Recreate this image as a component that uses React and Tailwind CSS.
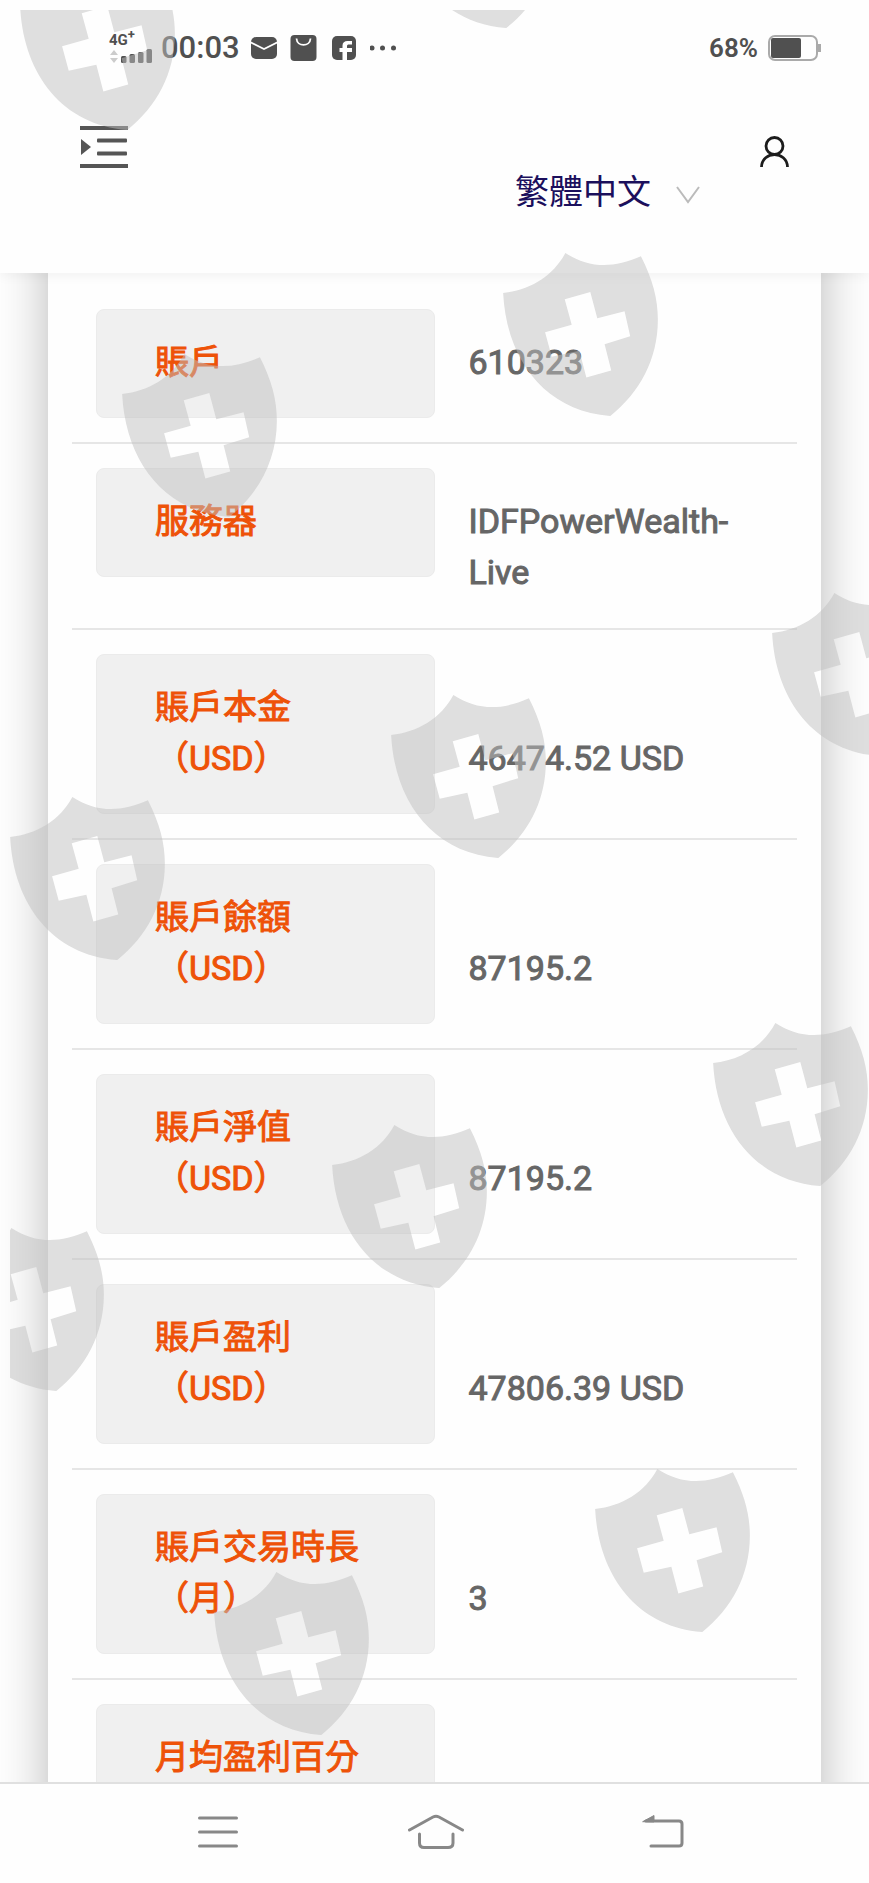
import React, { useState } from "react";

const rows = [
  { label: "賬戶", value: "610323" },
  { label: "服務器", value: "IDFPowerWealth-Live" },
  { label: "賬戶本金（USD）", value: "46474.52 USD", twoLine: true },
  { label: "賬戶餘額（USD）", value: "87195.2", twoLine: true },
  { label: "賬戶淨值（USD）", value: "87195.2", twoLine: true },
  { label: "賬戶盈利（USD）", value: "47806.39 USD", twoLine: true },
  { label: "賬戶交易時長（月）", value: "3", twoLine: true },
  { label: "月均盈利百分", value: "" },
];

// Watermark positions, measured from the overlay's corner
const shields = [
  { x: 10, y: -43 },
  { x: 389, y: -145 },
  { x: 493, y: 243 },
  { x: 112, y: 344 },
  { x: 762, y: 583 },
  { x: 381, y: 685 },
  { x: 0, y: 787 },
  { x: 703, y: 1013 },
  { x: 322, y: 1115 },
  { x: -61, y: 1218 },
  { x: 585, y: 1459 },
  { x: 204, y: 1562 },
];

const Shield = ({ x, y }) => (
  <svg
    className="absolute h-[163px] w-[155px]"
    style={{ left: x, top: y }}
    viewBox="0 0 465 490"
    fill="#bfbfbf"
    fillOpacity="0.5"
    fillRule="evenodd"
  >
    <path d="M0 120C80 112 150 70 187 0C255 45 330 48 414 10C450 80 465 140 465 200C465 320 410 420 322 490C125 475 10 320 0 120ZM185 139L206 216L126 238L146 312L229 294L250 374L325 353L305 274L382 250L365 175L283 196L262 117Z" />
  </svg>
);

const Watermark = () => (
  <div className="pointer-events-none absolute top-2.5 right-0 bottom-0 left-2.5 z-30 overflow-hidden" aria-hidden="true">
    {shields.map((s) => (
      <Shield key={`${s.x}-${s.y}`} x={s.x} y={s.y} />
    ))}
  </div>
);

const StatusBar = () => (
  <div className="flex h-24 items-center justify-between pr-12 pl-[109px] text-[#505050]">
    <div className="flex items-center">
      <div className="w-[52px]">
        <div className="text-[15px] leading-4 font-bold">
          4G<sup className="text-[13px] leading-none">+</sup>
        </div>
        <svg className="h-4 w-[44px]" viewBox="0 0 44 16" fill="#505050">
          <path d="M1 7L5 2L9 7ZM1 10L5 15L9 10Z" fill="#ccc" />
          <rect x="12" y="8" width="5.500" height="7" rx="1.500" />
          <rect x="20.500" y="6" width="5.500" height="9" rx="1.500" />
          <rect x="29" y="4" width="5.500" height="11" rx="1.500" />
          <rect x="37.500" y="1" width="5.500" height="14" rx="1.500" />
        </svg>
      </div>
      <span className="text-[31px] leading-9 font-medium">00:03</span>
      <svg className="ml-[10px] h-7 w-7" viewBox="0 0 28 28">
        <rect x="1" y="3" width="26" height="22" rx="5" fill="#505050" />
        <path d="M0 8L14 15L28 8" fill="none" stroke="#fff" strokeWidth="1.800" />
      </svg>
      <svg className="ml-3 h-7 w-7" viewBox="0 0 28 28">
        <rect x="0.500" y="1" width="26" height="26" rx="4" fill="#505050" />
        <path d="M6.500 4.500C7 13 20 13 20.500 4.500" fill="none" stroke="#fff" strokeWidth="1.800" />
      </svg>
      <svg className="ml-3 h-7 w-7" viewBox="0 0 28 28">
        <rect x="2" y="2" width="24" height="24" rx="5" fill="#505050" />
        <path d="M12.500 26V18H9.500V14H12.500V11.500C12.500 8.500 14.500 7 17.500 7H22V10.500H19C17.500 10.500 17 11 17 12.300V14H22V18H17V26Z" fill="#fff" />
      </svg>
      <svg className="ml-3 h-7 w-7" viewBox="0 0 28 28" fill="#505050">
        <circle cx="2" cy="14" r="2.500" />
        <circle cx="12.500" cy="14" r="2.500" />
        <circle cx="23.500" cy="14" r="2.500" />
      </svg>
    </div>
    <div className="flex items-center gap-[10px]">
      <span className="text-[26px] leading-8 font-semibold">68%</span>
      <svg className="h-[26px] w-[53px]" viewBox="0 0 53 26">
        <rect x="1" y="1" width="48" height="24" rx="6" fill="none" stroke="#aaa" strokeWidth="2" />
        <rect x="3" y="3" width="30" height="20" rx="2" fill="#505050" />
        <rect x="50" y="9" width="3" height="8" fill="#aaa" />
      </svg>
    </div>
  </div>
);

const Header = () => {
  const [lang, setLang] = useState("zh-TW");

  return (
    <header className="relative z-10 bg-[#fefefe] shadow-[0_2px_12px_rgba(0,0,0,0.06)]">
      <StatusBar />
      <div className="flex h-[177px] items-start px-20 pt-[30px]">
        <button type="button" aria-label="Menu">
          <svg className="h-[42px] w-12" viewBox="0 0 48 42" fill="#555">
            <rect x="0" y="0" width="48" height="4" />
            <rect x="17" y="12.500" width="30" height="4" rx="1" />
            <rect x="17" y="25.500" width="30" height="4" rx="1" />
            <rect x="0" y="38" width="48" height="4" />
            <path d="M1 13V29L11 21Z" />
          </svg>
        </button>
        <div className="relative mt-10 ml-auto">
          <select
            aria-label="Language"
            className="block h-[52px] w-[189px] appearance-none bg-transparent text-[34px] leading-[52px] text-[#1b0f5c] outline-none"
            value={lang}
            onChange={(e) => setLang(e.target.value)}
          >
            <option value="zh-TW">繁體中文</option>
          </select>
          <svg className="pointer-events-none absolute top-[20px] right-1 h-[18px] w-6" viewBox="0 0 24 18" fill="none" stroke="#bbb" strokeWidth="2">
            <path d="M1 1L12 16L23 1" />
          </svg>
        </div>
        <button type="button" aria-label="Account" className="mt-[10px] ml-14">
          <svg className="h-8 w-[29px]" viewBox="0 0 29 32" fill="none" stroke="#1c1c1c" strokeWidth="2.800">
            <circle cx="14.500" cy="10" r="8.500" />
            <path d="M1.500 31C2 14.500 27 14.500 27.500 31" />
          </svg>
        </button>
      </div>
    </header>
  );
};

// Values of two-line labels sit on the second line
const Row = ({ label, value, twoLine }) => (
  <div className="flex items-start border-b-2 border-[#e6e6e6] px-6 pt-6">
    <dt className="mb-6 w-1/2 shrink-0 rounded-lg border border-[#ebebeb] bg-[#f0f0f0] px-[58px] pt-[27px] pb-[29px] text-[#ee5208]">
      {label}
    </dt>
    <dd className={`min-w-0 flex-1 pb-[30px] pl-[34px] wrap-break-word text-[#666] ${twoLine ? "pt-[79px]" : "pt-7"}`}>
      {value}
    </dd>
  </div>
);

const BottomNav = () => (
  <nav className="relative z-10 flex h-[101px] shrink-0 items-center justify-center gap-[170px] border-t-2 border-[#e0e0e0] bg-[#fefefe] pb-[3px] pl-5">
    <button type="button" aria-label="Recent apps">
      <svg className="h-9 w-10" viewBox="0 0 40 36" fill="none" stroke="#888" strokeWidth="3" strokeLinecap="round">
        <path d="M1.500 4H38.500M1.500 18H38.500M1.500 32H38.500" />
      </svg>
    </button>
    <button type="button" aria-label="Home">
      <svg className="h-9 w-14" viewBox="0 0 56 36" fill="none" stroke="#888" strokeWidth="3" strokeLinecap="round">
        <path d="M1.500 16L25 3Q28 1.500 31 3L54.500 16" />
        <path d="M11.500 20V29Q11.500 33.500 16 33.500H40Q45 33.500 45 29V20" />
      </svg>
    </button>
    <button type="button" aria-label="Back">
      <svg className="h-9 w-[58px]" viewBox="0 0 58 36" fill="none" stroke="#888" strokeWidth="3" strokeLinecap="round">
        <path d="M12 7H45Q48 7 48 10V29Q48 32 45 32H17" />
        <path d="M9 7.500L20 1.500V7.500Z" fill="#888" strokeWidth="1" />
      </svg>
    </button>
  </nav>
);

const App = () => {
  return (
    <div className="relative flex h-screen flex-col overflow-hidden bg-[#fefefe] font-[Roboto,'Noto_Sans_CJK_TC',sans-serif]">
      <Header />
      <main className="min-h-0 flex-1 overflow-hidden">
        <div className="mx-12 -mt-12 bg-[#fefefe] px-6 pt-[60px] pb-12 shadow-[0_0_48px_#b9b9b9]">
          <dl className="text-[34px] leading-[51px] [-webkit-text-stroke:1px]">
            {rows.map((row) => (
              <Row key={row.label} {...row} />
            ))}
          </dl>
        </div>
      </main>
      <BottomNav />
      <Watermark />
    </div>
  );
};

export default App;
